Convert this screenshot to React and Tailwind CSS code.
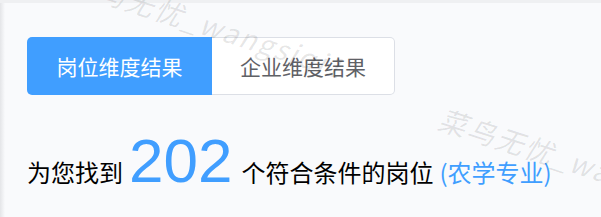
export default function App() {
  const cjk = 'font-["Noto_Sans_CJK_SC","Noto_Sans",sans-serif]'

  return (
    <div className={`relative w-[601px] h-[217px] overflow-hidden bg-[#f9fafc] ${cjk}`}>
      {/* top header edge */}
      <div className="h-[3px] bg-[#eff0f2]" />

      <div className="flex h-[214px]">
        {/* sidebar shadow */}
        <div className="w-[5px] bg-gradient-to-r from-[#e4e5e8] to-[#f9fafc]" />

        <div className="pl-[22px] pt-[34px]">
          {/* Tabs */}
          <div className="flex h-[58px]">
            <button className="w-[185px] rounded-l-[5px] bg-[#409eff] text-[21px] text-white leading-none">
              岗位维度结果
            </button>
            <button className="w-[183px] rounded-r-[5px] border border-l-0 border-[#dcdfe6] bg-white text-[21px] text-[#5f6166] leading-none">
              企业维度结果
            </button>
          </div>

          {/* Result line */}
          <div className="mt-[35px] flex items-baseline whitespace-nowrap text-[24px] text-black">
            <span>为您找到</span>
            <span className='ml-[6px] font-["Liberation_Sans",Arial,sans-serif] text-[62px] leading-none text-[#409eff]'>
              202
            </span>
            <span className="ml-[9px]">个符合条件的岗位</span>
            <span className="ml-[6px] text-[#409eff]">(农学专业)</span>
          </div>
        </div>
      </div>

      {/* watermarks */}
      <div className="pointer-events-none absolute left-[70px] top-[-42px] rotate-[18deg] origin-left whitespace-nowrap text-[28px] italic tracking-[2px] text-black/[0.1]">
        菜鸟无忧_wangsiqi1
      </div>
      <div className="pointer-events-none absolute left-[440px] top-[96px] rotate-[18deg] origin-left whitespace-nowrap text-[28px] italic tracking-[2px] text-black/[0.1]">
        菜鸟无忧_wangsiqi1
      </div>
    </div>
  )
}
